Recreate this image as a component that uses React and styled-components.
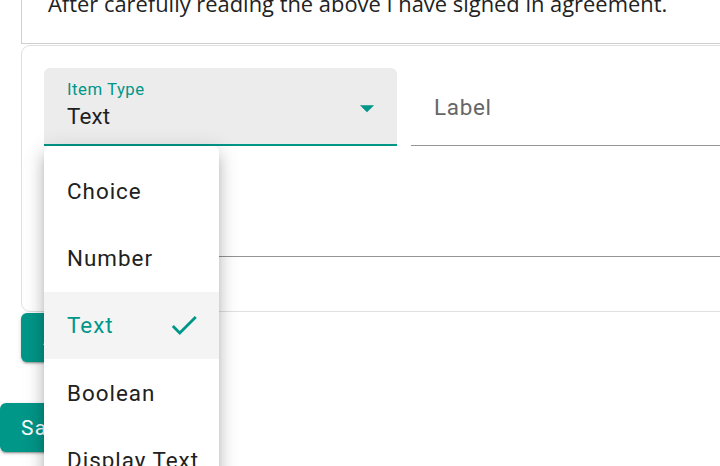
import React from "react";
import styled, { createGlobalStyle } from "styled-components";

const Global = createGlobalStyle`
  html, body { margin: 0; padding: 0; background: #fff; overflow: hidden; }
  body { width: 720px; height: 466px; font-family: Roboto, "Liberation Sans", sans-serif; }
`;

const TEAL = "#009688";

const Page = styled.div`
  position: relative;
  width: 780px;
  display: flex;
  flex-direction: column;
  align-items: flex-start;
`;

const Section = styled.div`
  align-self: stretch;
  padding-left: 21px;
  display: flex;
  flex-direction: column;
  align-items: flex-start;
`;

const NoticeCard = styled.div`
  align-self: stretch;
  box-sizing: border-box;
  margin-top: -40px;
  height: 84px;
  padding: 30px 26px 0;
  border-left: 1px solid #cfcfcf;
  border-bottom: 1px solid #cfcfcf;
  font-family: "Open Sans", "DejaVu Sans", sans-serif;
  font-size: 21.9px;
  line-height: 28px;
  color: #222;
  white-space: nowrap;
`;

const FormCard = styled.div`
  align-self: stretch;
  box-sizing: border-box;
  margin-top: 1px;
  height: 267px;
  padding: 22px 0 0 22px;
  border: 1px solid #e0e0e0;
  border-radius: 9px;
  display: flex;
  flex-direction: column;
  gap: 33px;
`;

const Row = styled.div`
  display: flex;
  gap: 14px;
  height: 78px;
`;

const FilledSelect = styled.div`
  position: relative;
  box-sizing: border-box;
  width: 353px;
  height: 78px;
  background: #ececec;
  border-radius: 6px 6px 0 0;
  border-bottom: 2px solid ${TEAL};
  padding: 11px 23px 0;
  display: flex;
  flex-direction: column;
`;

const SelectLabel = styled.span`
  font-size: 16.8px;
  letter-spacing: 0.5px;
  line-height: 20px;
  color: ${TEAL};
`;

const SelectValue = styled.span`
  font-size: 22.4px;
  line-height: 32px;
  letter-spacing: 0.2px;
  margin-top: 1px;
  color: #1f1f1f;
`;

const ArrowIcon = styled.svg`
  position: absolute;
  right: 13px;
  top: 23px;
  width: 34px;
  height: 34px;
  fill: ${TEAL};
`;

const TextField = styled.div`
  box-sizing: border-box;
  flex: ${(p) => (p.$grow ? 1 : "none")};
  width: ${(p) => (p.$grow ? "auto" : "100%")};
  height: 78px;
  border-bottom: 1px solid #949494;
  padding: ${(p) => (p.$grow ? "25px 23px 0" : "0")};
`;

const FieldLabel = styled.span`
  font-size: 22.4px;
  letter-spacing: 0.7px;
  line-height: 28px;
  color: #666;
`;

const Button = styled.button`
  box-sizing: border-box;
  height: 49px;
  width: ${(p) => p.$w}px;
  margin-top: ${(p) => p.$mt}px;
  padding: 0 ${(p) => p.$px}px;
  border: none;
  border-radius: 6px;
  background: ${TEAL};
  color: #fff;
  font-family: Roboto, sans-serif;
  font-size: 21px;
  letter-spacing: 1.2px;
  text-align: left;
  box-shadow: 0 3px 1px -2px rgba(0,0,0,0.2), 0 2px 2px 0 rgba(0,0,0,0.14), 0 1px 5px 0 rgba(0,0,0,0.12);
`;

const Menu = styled.ul`
  position: absolute;
  left: 44px;
  top: 146px;
  width: 175px;
  margin: 0;
  padding: 11px 0 0;
  list-style: none;
  background: #fff;
  border-radius: 6px;
  box-shadow: 0 7px 7px -4px rgba(0,0,0,0.2), 0 11px 14px 1px rgba(0,0,0,0.14), 0 4px 20px 3px rgba(0,0,0,0.12);
  height: 340px;
  overflow: hidden;
`;

const MenuItem = styled.li`
  position: relative;
  box-sizing: border-box;
  height: 67.4px;
  padding-left: 23px;
  display: flex;
  align-items: center;
  font-size: 22.4px;
  letter-spacing: 1px;
  color: ${(p) => (p.$selected ? TEAL : "#212121")};
  background: ${(p) => (p.$selected ? "#f4f4f4" : "transparent")};
`;

const CheckIcon = styled.svg`
  position: absolute;
  left: 123px;
  top: 16px;
  width: 34px;
  height: 34px;
  fill: ${TEAL};
`;

const items = ["Choice", "Number", "Text", "Boolean", "Display Text"];

export default function App() {
  return (
    <>
      <Global />
      <Page>
        <Section>
          <NoticeCard>After carefully reading the above I have signed in agreement.</NoticeCard>
          <FormCard>
            <Row>
              <FilledSelect>
                <SelectLabel>Item Type</SelectLabel>
                <SelectValue>Text</SelectValue>
                <ArrowIcon viewBox="0 0 24 24"><path d="M7 10l5 5 5-5z" /></ArrowIcon>
              </FilledSelect>
              <TextField $grow>
                <FieldLabel>Label</FieldLabel>
              </TextField>
            </Row>
            <Row>
              <TextField />
            </Row>
          </FormCard>
          <Button $w={190} $mt={1} $px={22}>Add Item</Button>
        </Section>
        <Button $w={110} $mt={41} $px={21}>Save</Button>
        <Menu>
          {items.map((it) => (
            <MenuItem key={it} $selected={it === "Text"}>
              {it}
              {it === "Text" && (
                <CheckIcon viewBox="0 0 24 24">
                  <path d="M9 16.17 4.83 12l-1.42 1.41L9 19 21 7l-1.41-1.41z" />
                </CheckIcon>
              )}
            </MenuItem>
          ))}
        </Menu>
      </Page>
    </>
  );
}
